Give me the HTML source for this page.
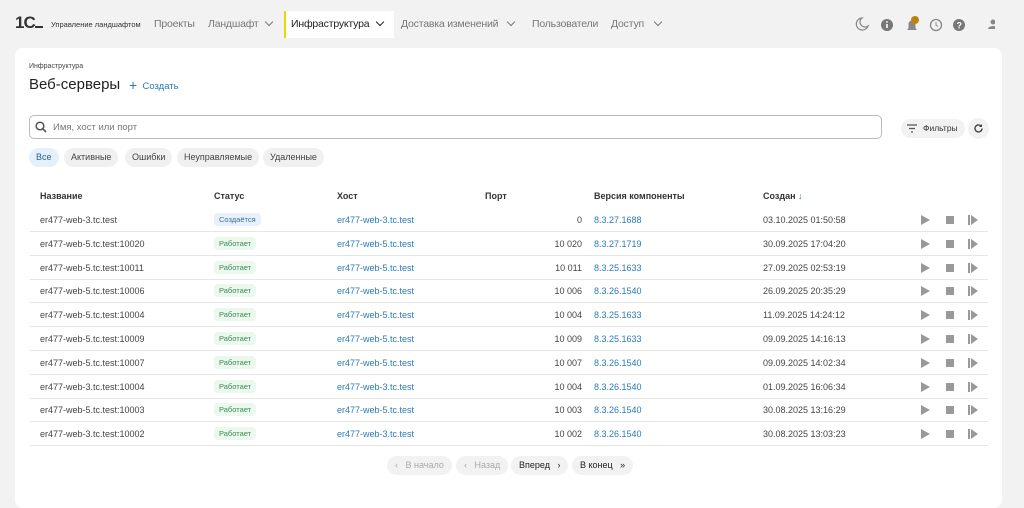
<!DOCTYPE html>
<html><head><meta charset="utf-8"><style>
*{box-sizing:border-box;margin:0;padding:0}
body{width:1024px;height:488px;overflow:hidden;background:#f2f2f2;font-family:"Liberation Sans",sans-serif;position:relative;color:#333}
.a{position:absolute;white-space:nowrap}
.nav{font-size:10.5px;color:#777;top:18px;letter-spacing:-0.2px}
.chev{position:absolute;top:19px;width:6px;height:6px;border-right:1.5px solid #777;border-bottom:1.5px solid #777;transform:rotate(45deg)}
.card{position:absolute;left:15px;top:48px;width:987px;height:460px;background:#fff;border-radius:8px}
.chip{position:absolute;top:148px;height:19px;border-radius:10px;background:#f0f0f0;font-size:9px;color:#444;line-height:19px;padding:0 7px}
.th{font-size:9px;font-weight:bold;color:#333;top:191px}
.row{position:absolute;left:30px;width:958px;height:24px;border-bottom:1px solid #e6e6e6;font-size:9px;color:#444}
.row span{position:absolute;top:7px;white-space:nowrap}
.lk{color:#2a7ab8}
.st{top:5px!important;padding:2px 5px;border-radius:4px;font-size:7.5px;background:#eaf8ee;color:#3d8a55}
.ic{position:absolute;top:7px}
.pg{position:absolute;top:456px;height:19px;border-radius:10px;background:#f2f2f2;font-size:9px;line-height:19px;padding:0 8px}
</style></head><body>
<div class="a" style="left:15px;top:13px;font-size:17px;font-weight:bold;color:#333;letter-spacing:-1px">1C<span style="display:inline-block;width:8px;border-bottom:2px solid #333"></span></div>
<div class="a" style="left:51px;top:20px;font-size:7.5px;color:#333">Управление ландшафтом</div>
<div class="a nav" style="left:154px">Проекты</div>
<div class="a nav" style="left:208px">Ландшафт</div><div class="chev" style="left:266px"></div>
<div class="a" style="left:284px;top:11px;width:110px;height:27px;background:#fff;border-left:2px solid #f0d400"></div>
<div class="a nav" style="left:291px;color:#222">Инфраструктура</div><div class="chev" style="left:377px;border-color:#222"></div>
<div class="a nav" style="left:401px">Доставка изменений</div><div class="chev" style="left:508px"></div>
<div class="a nav" style="left:532px">Пользователи</div>
<div class="a nav" style="left:611px">Доступ</div><div class="chev" style="left:655px"></div>
<svg class="a" style="left:855px;top:16px" width="140" height="18">
<path d="M7 2a6 6 0 1 0 6 8a5 5 0 0 1-6-8z" fill="none" stroke="#888" stroke-width="1.2"/>
<circle cx="32" cy="9" r="6" fill="#777"/><rect x="31.2" y="8" width="1.6" height="4" fill="#fff"/><circle cx="32" cy="6" r="0.9" fill="#fff"/>
<path d="M52 14h10l-1.5-2v-4a3.5 3.5 0 0 0-7 0v4z" fill="#888"/><circle cx="60" cy="4" r="4" fill="#b8860b"/>
<circle cx="81" cy="9" r="5.5" fill="none" stroke="#888" stroke-width="1.3"/><path d="M81 6v3l2 1.5" stroke="#888" fill="none"/>
<circle cx="104" cy="9" r="6" fill="#777"/><text x="101.5" y="12.5" font-size="9" fill="#fff" font-weight="bold" font-family="Liberation Sans">?</text>
<circle cx="138" cy="6" r="2.5" fill="#888"/><path d="M133 13a5 3 0 0 1 10 0z" fill="#888"/>
</svg>
<div class="card"></div>
<div class="a" style="left:29px;top:63px;font-size:7px;color:#444">Инфраструктура</div>
<div class="a" style="left:29px;top:76px;font-size:15px;color:#222">Веб-серверы</div>
<div class="a" style="left:129px;top:76px;font-size:9.5px;color:#2a7ab8"><span style="font-size:14px;position:relative;top:1px">+</span>&nbsp; Создать</div>
<div class="a" style="left:29px;top:115px;width:853px;height:24px;border:1px solid #bbb;border-radius:5px"></div>
<svg class="a" style="left:35px;top:121px" width="12" height="12"><circle cx="5" cy="5" r="3.8" fill="none" stroke="#555" stroke-width="1.5"/><path d="M8 8l3 3" stroke="#555" stroke-width="1.6"/></svg>
<div class="a" style="left:53px;top:122px;font-size:9.5px;color:#777">Имя, хост или порт</div>
<div class="a" style="left:901px;top:119px;width:64px;height:19px;border-radius:10px;background:#f2f2f2;font-size:8.5px;line-height:19px;padding-left:22px;color:#333">Фильтры</div>
<svg class="a" style="left:907px;top:124px" width="10" height="9"><path d="M0 1h10M2 4.5h6M4 8h2" stroke="#555" stroke-width="1.2"/></svg>
<div class="a" style="left:968px;top:118px;width:21px;height:21px;border-radius:50%;background:#f2f2f2"></div>
<svg class="a" style="left:973px;top:123px" width="11" height="11"><path d="M9 5.5a3.5 3.5 0 1 1-1.2-2.7" fill="none" stroke="#444" stroke-width="1.4"/><path d="M9 1v3h-3z" fill="#444"/></svg>
<div class="chip" style="left:29px;background:#e4f0fb;color:#2a5f8f">Все</div>
<div class="chip" style="left:64px">Активные</div>
<div class="chip" style="left:125px">Ошибки</div>
<div class="chip" style="left:177px">Неуправляемые</div>
<div class="chip" style="left:263px">Удаленные</div>
<div class="a th" style="left:40px">Название</div>
<div class="a th" style="left:214px">Статус</div>
<div class="a th" style="left:337px">Хост</div>
<div class="a th" style="left:485px">Порт</div>
<div class="a th" style="left:594px">Версия компоненты</div>
<div class="a th" style="left:763px">Создан <span style="color:#2a7ab8">↓</span></div>
<div id="rows"></div>
<div class="pg" style="left:387px;color:#aaa">‹&nbsp;&nbsp; В начало</div>
<div class="pg" style="left:456px;color:#aaa">‹&nbsp;&nbsp; Назад</div>
<div class="pg" style="left:511px;color:#222">Вперед&nbsp;&nbsp; ›</div>
<div class="pg" style="left:572px;color:#222">В конец&nbsp;&nbsp; »</div>
<script>
const d=[["er477-web-3.tc.test","Создаётся","er477-web-3.tc.test","0","8.3.27.1688","03.10.2025 01:50:58"],
["er477-web-5.tc.test:10020","Работает","er477-web-5.tc.test","10 020","8.3.27.1719","30.09.2025 17:04:20"],
["er477-web-5.tc.test:10011","Работает","er477-web-5.tc.test","10 011","8.3.25.1633","27.09.2025 02:53:19"],
["er477-web-5.tc.test:10006","Работает","er477-web-5.tc.test","10 006","8.3.26.1540","26.09.2025 20:35:29"],
["er477-web-5.tc.test:10004","Работает","er477-web-5.tc.test","10 004","8.3.25.1633","11.09.2025 14:24:12"],
["er477-web-5.tc.test:10009","Работает","er477-web-5.tc.test","10 009","8.3.25.1633","09.09.2025 14:16:13"],
["er477-web-5.tc.test:10007","Работает","er477-web-5.tc.test","10 007","8.3.26.1540","09.09.2025 14:02:34"],
["er477-web-3.tc.test:10004","Работает","er477-web-3.tc.test","10 004","8.3.26.1540","01.09.2025 16:06:34"],
["er477-web-5.tc.test:10003","Работает","er477-web-5.tc.test","10 003","8.3.26.1540","30.08.2025 13:16:29"],
["er477-web-3.tc.test:10002","Работает","er477-web-3.tc.test","10 002","8.3.26.1540","30.08.2025 13:03:23"]];
let h="";d.forEach((r,i)=>{const y=208+i*23.8;
h+=`<div class="row" style="top:${y}px"><span style="left:10px">${r[0]}</span><span class="st" style="left:184px${i==0?';background:#e8f1fb;color:#3a6f9f':''}">${r[1]}</span><span class="lk" style="left:307px">${r[2]}</span><span style="right:406px">${r[3]}</span><span class="lk" style="left:564px">${r[4]}</span><span style="left:733px">${r[5]}</span>
<svg class="ic" style="left:890px" width="60" height="10"><path d="M1 0l9 5l-9 5z" fill="#999"/><rect x="26" y="1" width="8" height="8" fill="#999"/><rect x="48" y="0" width="2" height="10" fill="#999"/><path d="M51 0l7 5l-7 5z" fill="#999"/></svg></div>`});
document.getElementById("rows").innerHTML=h;
</script>
</body></html>
